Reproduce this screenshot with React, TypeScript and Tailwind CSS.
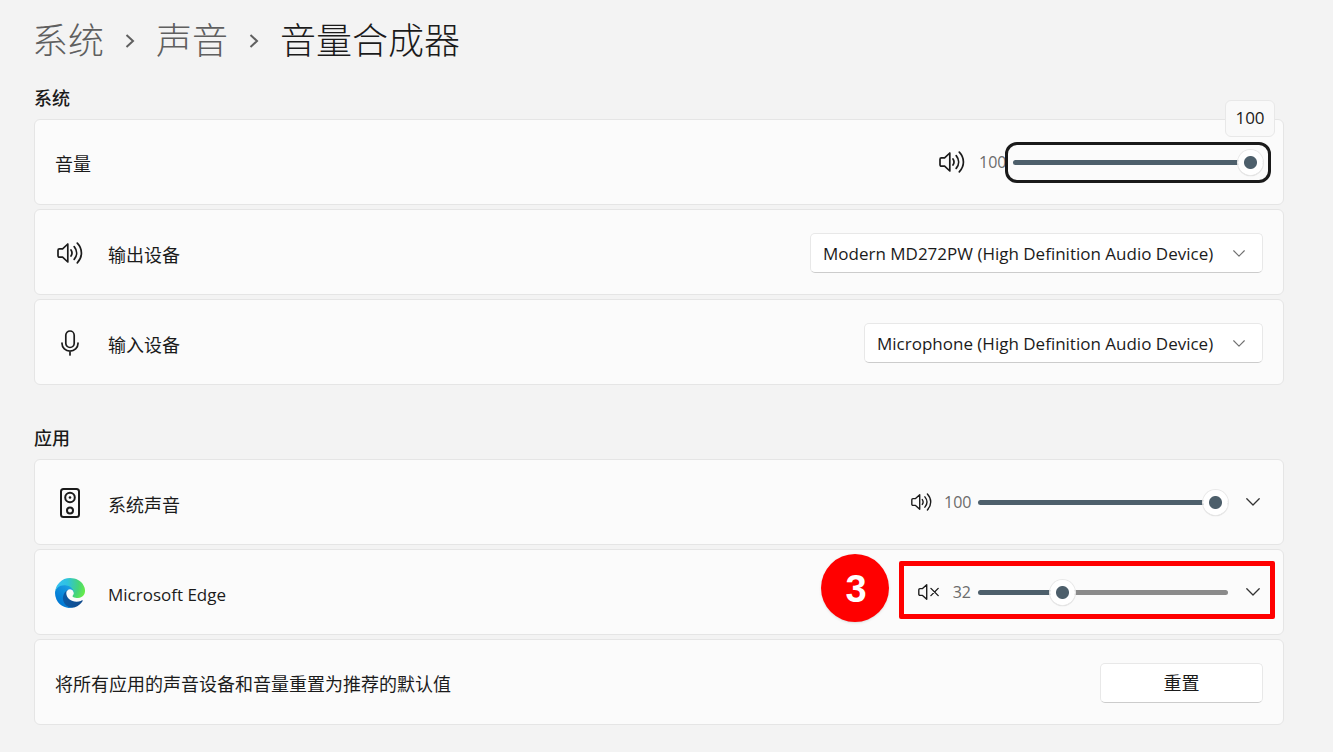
import { useState } from 'react';
import type { CSSProperties, ReactNode } from 'react';

type IconProps = { className?: string };

function SpeakerIcon({ className }: IconProps) {
  return (
    <svg viewBox="0 0 26 22" fill="none" stroke="currentColor" strokeWidth="1.7" strokeLinecap="round" strokeLinejoin="round" className={className} aria-hidden="true">
      <path d="M1 8.2a1.4 1.4 0 0 1 1.4-1.4h3.2L10.8 2v18l-5.2-4.8H2.4A1.4 1.4 0 0 1 1 13.8z" />
      <path d="M14 8c1.300 1.900 1.300 4.100 0 6M17.200 4.600c3.200 3.900 3.200 8.900 0 12.800M20.300 1.200c5.500 5.800 5.500 13.800 0 19.600" />
    </svg>
  );
}

function MutedIcon({ className }: IconProps) {
  return (
    <svg viewBox="0 0 26 22" fill="none" stroke="currentColor" strokeWidth="1.7" strokeLinecap="round" strokeLinejoin="round" className={className} aria-hidden="true">
      <path d="M1 8.2a1.4 1.4 0 0 1 1.4-1.4h3.2L10.8 2v18l-5.2-4.8H2.4A1.4 1.4 0 0 1 1 13.8z" />
      <path d="M16 6.500l9 9M25 6.500l-9 9" />
    </svg>
  );
}

function MicIcon({ className }: IconProps) {
  return (
    <svg viewBox="0 0 18 26" fill="none" stroke="currentColor" strokeWidth="1.7" strokeLinecap="round" className={className} aria-hidden="true">
      <rect x="4.800" y="1" width="8.400" height="16.500" rx="4.200" />
      <path d="M1 13v.5a8 7.700 0 0 0 16 0V13M9 21.300V25" />
    </svg>
  );
}

function SoundBoxIcon({ className }: IconProps) {
  return (
    <svg viewBox="0 0 20 30" fill="none" stroke="currentColor" strokeWidth="2" className={className} aria-hidden="true">
      <rect x="1" y="1" width="18" height="28" rx="2.500" />
      <circle cx="10" cy="9.500" r="4.800" />
      <circle cx="10" cy="9.500" r="1.300" fill="currentColor" stroke="none" />
      <circle cx="10" cy="22.500" r="3" />
    </svg>
  );
}

function EdgeIcon({ className }: IconProps) {
  return (
    <svg viewBox="0 0 256 256" className={className} aria-hidden="true">
      <defs>
        <linearGradient id="edge-a" x1="63" y1="178" x2="241" y2="178" gradientUnits="userSpaceOnUse">
          <stop offset="0" stopColor="#0c59a4" />
          <stop offset="1" stopColor="#114a8b" />
        </linearGradient>
        <linearGradient id="edge-b" x1="153" y1="100" x2="46" y2="235" gradientUnits="userSpaceOnUse">
          <stop offset="0" stopColor="#1b9de2" />
          <stop offset=".2" stopColor="#1595df" />
          <stop offset=".7" stopColor="#0680d7" />
          <stop offset="1" stopColor="#0078d4" />
        </linearGradient>
        <radialGradient id="edge-c" cx="26" cy="47" r="235" gradientUnits="userSpaceOnUse">
          <stop offset="0" stopColor="#35c1f1" />
          <stop offset=".35" stopColor="#2fc2df" />
          <stop offset=".75" stopColor="#45d47a" />
          <stop offset="1" stopColor="#66eb4a" />
        </radialGradient>
      </defs>
      <path fill="url(#edge-a)" d="M231 190.500a93.700 93.700 0 0 1-10.500 4.700 101.900 101.900 0 0 1-35.900 6.500c-47.300 0-88.500-32.500-88.500-74.300a31.500 31.500 0 0 1 16.400-27.300c-42.800 1.800-53.800 46.400-53.800 72.500 0 73.900 68.100 81.400 82.800 81.400 7.900 0 19.800-2.300 27-4.600l1.300-.4a128.300 128.300 0 0 0 66.600-52.800 4 4 0 0 0-5.400-5.700z" />
      <path fill="url(#edge-b)" d="M105.700 241.400a79.200 79.200 0 0 1-22.700-21.300 80.700 80.700 0 0 1 29.500-120c3.200-1.500 8.500-4.100 15.600-4a32.400 32.400 0 0 1 25.700 13 31.900 31.900 0 0 1 6.300 18.700c0-.2 24.500-79.600-80-79.600-43.900 0-80 41.600-80 78.200a130.200 130.200 0 0 0 12.100 56 128 128 0 0 0 156.400 67 75.500 75.500 0 0 1-62.800-8z" />
      <path fill="url(#edge-c)" d="M152.300 148.900c-.8 1-3.300 2.500-3.300 5.700 0 2.600 1.700 5.200 4.800 7.300 14.400 10.100 41.700 8.700 41.700 8.700a59.600 59.600 0 0 0 30.300-8.300 61.400 61.400 0 0 0 30.400-52.900c.3-22.400-8-37.300-11.300-43.900C223.600 24 177.700 1 128 1A128 128 0 0 0 0 127.200c.5-36.500 36.800-66 80-66 3.500 0 23.500.3 42 10a72.600 72.600 0 0 1 30.900 29.300c6.100 10.600 7.200 24.100 7.200 29.500s-2.700 13.300-7.800 19.900z" />
    </svg>
  );
}

function Chevron({ className }: IconProps) {
  return (
    <svg viewBox="0 0 14 8" fill="none" stroke="currentColor" strokeWidth="1.3" strokeLinecap="round" strokeLinejoin="round" className={className} aria-hidden="true">
      <path d="M.8.8L7 7l6.200-6.200" />
    </svg>
  );
}

function Crumb() {
  return (
    <svg viewBox="0 0 10 14" fill="none" stroke="currentColor" strokeWidth="2" className="h-[14px] w-[10px] text-[#5f5f5f]" aria-hidden="true">
      <path d="M1.500 1L8 7l-6.500 6" />
    </svg>
  );
}

function Card({ children }: { children: ReactNode }) {
  return (
    <div className="flex min-h-[86px] items-center justify-between rounded-md border border-[#e5e5e5] bg-[#fbfbfb] px-5">
      {children}
    </div>
  );
}

function RowLabel({ icon, children }: { icon: ReactNode; children: ReactNode }) {
  return (
    <div className="flex items-center gap-[23px] pt-0.5">
      <span className="flex w-[30px] justify-center">{icon}</span>
      <span className="pt-1">{children}</span>
    </div>
  );
}

type SliderProps = { label: string; initial: number; focused?: boolean };

function Slider({ label, initial, focused }: SliderProps) {
  const [value, setValue] = useState(initial);

  return (
    <>
      <output className="w-[27px] text-right text-base text-[#6b6b6b]">{value}</output>
      <div className="relative flex">
        <input
          type="range"
          aria-label={label}
          value={value}
          onChange={(e) => setValue(Number(e.target.value))}
          style={{ '--fill': `${value}%` } as CSSProperties}
          className={`
            h-[25px] w-[250px] appearance-none rounded-sm bg-transparent
            [&::-webkit-slider-runnable-track]:h-[5px]
            [&::-webkit-slider-runnable-track]:rounded-full
            [&::-webkit-slider-runnable-track]:bg-[linear-gradient(to_right,#4d5f6b_var(--fill),#8b8b8b_var(--fill))]
            [&::-webkit-slider-thumb]:mt-[-10px]
            [&::-webkit-slider-thumb]:size-[25px]
            [&::-webkit-slider-thumb]:appearance-none
            [&::-webkit-slider-thumb]:rounded-full
            [&::-webkit-slider-thumb]:shadow-[0_0_0_1px_#e8e8e8,0_1px_1px_#c0c0c0]
            [&::-webkit-slider-thumb]:bg-[radial-gradient(circle,#4d5f6b_6px,#fff_7px)]
            ${focused ? 'outline-[3px] outline-offset-[5px] outline-[#1a1a1a]' : 'outline-none'}
          `}
        />
        {focused && (
          <div className="absolute -top-[50px] -right-3 flex h-[37px] w-[50px] items-center justify-center rounded-md border border-[#e8e8e8] bg-[#f9f9f9]">
            {value}
          </div>
        )}
      </div>
    </>
  );
}

function DeviceSelect({ label, device }: { label: string; device: string }) {
  return (
    <div className="relative mt-0.5 flex items-center">
      <select
        aria-label={label}
        className="h-10 appearance-none rounded-[5px] border border-[#e8e8e8] border-b-[#cccccc] bg-white pt-0.5 pr-12 pl-3"
      >
        <option>{device}</option>
      </select>
      <Chevron className="pointer-events-none absolute right-[18px] h-[7px] w-3 text-[#707070]" />
    </div>
  );
}

function ExpandButton({ label }: { label: string }) {
  return (
    <button type="button" aria-label={label} className="ml-[15px] flex h-10 w-5 items-center justify-center text-[#333333]">
      <Chevron className="h-2 w-[14px]" />
    </button>
  );
}

export default function App() {
  return (
    <main className="min-h-screen bg-[#f3f3f3] pt-4 pr-[49px] pb-7 pl-[34px] font-['Open_Sans','Noto_Sans_CJK_SC',sans-serif] text-[17px] leading-6 text-[#1b1b1b]">
      <nav className="-ml-0.5 flex h-[50px] items-center text-[36px] leading-[50px] font-light">
        <a href="#system" className="text-[#5f5f5f]">系统</a>
        <span className="flex w-[52px] justify-center"><Crumb /></span>
        <a href="#sound" className="text-[#5f5f5f]">声音</a>
        <span className="flex w-[52px] justify-center"><Crumb /></span>
        <h1>音量合成器</h1>
      </nav>

      <section className="mt-5">
        <h2 className="mb-[9px] text-[18px] font-medium">系统</h2>
        <div className="flex flex-col gap-1">
          <Card>
            <span className="pt-1 text-[18px]">音量</span>
            <div className="flex items-center gap-[7px]">
              <SpeakerIcon className="mr-[7px] h-[22px] w-[26px]" />
              <Slider label="音量" initial={100} focused />
            </div>
          </Card>
          <Card>
            <RowLabel icon={<SpeakerIcon className="h-[22px] w-[26px]" />}>
              <span className="text-[18px]">输出设备</span>
            </RowLabel>
            <DeviceSelect label="输出设备" device="Modern MD272PW (High Definition Audio Device)" />
          </Card>
          <Card>
            <RowLabel icon={<MicIcon className="h-[26px] w-[18px]" />}>
              <span className="text-[18px]">输入设备</span>
            </RowLabel>
            <DeviceSelect label="输入设备" device="Microphone (High Definition Audio Device)" />
          </Card>
        </div>
      </section>

      <section className="mt-[41px]">
        <h2 className="mb-[9px] text-[18px] font-medium">应用</h2>
        <div className="flex flex-col gap-1">
          <Card>
            <RowLabel icon={<SoundBoxIcon className="h-[30px] w-5" />}>
              <span className="text-[18px]">系统声音</span>
            </RowLabel>
            <div className="flex items-center">
              <SpeakerIcon className="mr-3 h-[18px] w-[21px]" />
              <div className="flex items-center gap-[7px]">
                <Slider label="系统声音" initial={100} />
              </div>
              <ExpandButton label="展开系统声音" />
            </div>
          </Card>
          <Card>
            <RowLabel icon={<EdgeIcon className="size-[30px]" />}>Microsoft Edge</RowLabel>
            <div className="relative flex items-center">
              <MutedIcon className="mr-[5px] h-[18px] w-[21px]" />
              <div className="flex items-center gap-[7px]">
                <Slider label="Microsoft Edge" initial={32} />
              </div>
              <ExpandButton label="展开 Microsoft Edge" />
              <div className="pointer-events-none absolute -top-[11px] -right-3 -bottom-[7px] -left-[19px] rounded-xs border-[5px] border-[#ff0000]" />
              <div className="absolute -top-[18px] -left-[97px] flex size-[68px] items-center justify-center rounded-full bg-[#ff0000] pt-0.5 pl-0.5 font-['Liberation_Sans',sans-serif] text-[38px] font-bold text-white shadow-sm">
                3
              </div>
            </div>
          </Card>
          <Card>
            <span className="pt-1 text-[18px]">将所有应用的声音设备和音量重置为推荐的默认值</span>
            <button type="button" className="mt-0.5 h-10 w-[163px] rounded-[5px] border border-[#e8e8e8] border-b-[#cccccc] bg-white text-[18px]">
              重置
            </button>
          </Card>
        </div>
      </section>
    </main>
  );
}
